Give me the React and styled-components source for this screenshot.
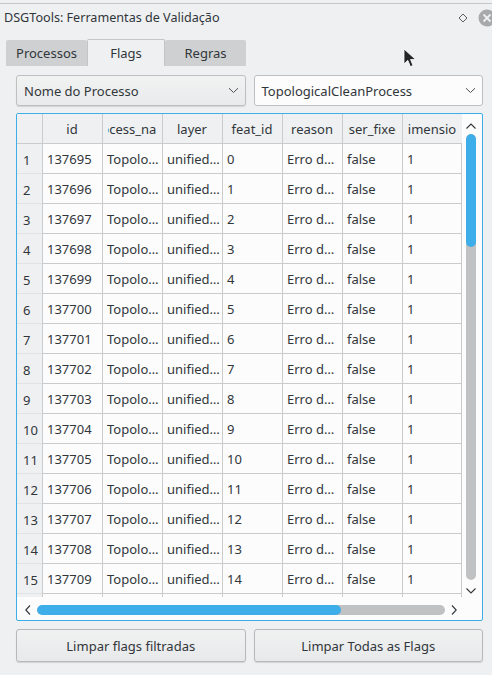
import styled, { createGlobalStyle } from "styled-components";

const GlobalStyle = createGlobalStyle`
  body {
    margin: 0;
    background: #eff0f1;
    font-family: "Noto Sans", "DejaVu Sans", sans-serif;
    font-size: 13px;
    color: #31363b;
  }
`;

const columns = ["id", "process_name", "layer", "feat_id", "reason", "user_fixed", "dimension"];

// rows shown in the flags table
const rows = Array.from({ length: 16 }, (_, i) => [
  String(137695 + i),
  "Topolo…",
  "unified…",
  String(i),
  "Erro d…",
  "false",
  "1",
]);

const App = () => {
  return (
    <Dock>
      <GlobalStyle />
      <TitleBar>
        <Title>DSGTools: Ferramentas de Validação</Title>
        <TitleIcons>
          <svg width="10" height="10" viewBox="0 0 10 10">
            <path d="M5 1 L9 5 L5 9 L1 5 Z" fill="none" stroke="#5c6063" strokeWidth="1" />
          </svg>
          <CloseBtn>
            <svg width="18" height="18" viewBox="0 0 18 18">
              <circle cx="9" cy="9" r="8.5" fill="#a7a9ab" />
              <path d="M5.5 5.5 L12.5 12.5 M12.5 5.5 L5.5 12.5" stroke="#eff0f1" strokeWidth="1.8" />
            </svg>
          </CloseBtn>
        </TitleIcons>
      </TitleBar>

      <Tabs>
        <Tab>Processos</Tab>
        <Tab $active>Flags</Tab>
        <Tab>Regras</Tab>
      </Tabs>

      <Panel>
        <ComboRow>
          <Combo>
            Nome do Processo
            <Chevron />
          </Combo>
          <Combo $editable>
            TopologicalCleanProcess
            <Chevron />
          </Combo>
        </ComboRow>

        <TableFrame>
          <TableArea>
            <Grid>
              <Corner />
              {columns.map((c) => (
                <HeadCell key={c}>
                  <HeadClip>
                    <span>{c}</span>
                  </HeadClip>
                </HeadCell>
              ))}
              {rows.map((r, i) => (
                <Row key={i}>
                  <RowNum>{i + 1}</RowNum>
                  {r.map((v, j) => (
                    <Cell key={j}>{v}</Cell>
                  ))}
                </Row>
              ))}
            </Grid>
            <VScroll>
              <Arrow>
                <svg width="12" height="8" viewBox="0 0 12 8">
                  <path d="M1.5 6.5 L6 2 L10.5 6.5" fill="none" stroke="#31363b" strokeWidth="1.1" />
                </svg>
              </Arrow>
              <VTrack>
                <VThumb />
              </VTrack>
              <Arrow>
                <svg width="12" height="8" viewBox="0 0 12 8">
                  <path d="M1.5 1.5 L6 6 L10.5 1.5" fill="none" stroke="#31363b" strokeWidth="1.1" />
                </svg>
              </Arrow>
            </VScroll>
          </TableArea>
          <HScroll>
            <HArrow>
              <svg width="8" height="12" viewBox="0 0 8 12">
                <path d="M6 1.5 L1.8 6 L6 10.5" fill="none" stroke="#31363b" strokeWidth="1.1" />
              </svg>
            </HArrow>
            <HTrack>
              <HThumb />
            </HTrack>
            <HArrow>
              <svg width="8" height="12" viewBox="0 0 8 12">
                <path d="M2 1.5 L6.2 6 L2 10.5" fill="none" stroke="#31363b" strokeWidth="1.1" />
              </svg>
            </HArrow>
          </HScroll>
        </TableFrame>

        <ButtonRow>
          <Button>Limpar flags filtradas</Button>
          <Button>Limpar Todas as Flags</Button>
        </ButtonRow>
      </Panel>

      <Cursor>
        <svg width="14" height="21" viewBox="0 0 14 21">
          <path d="M1 1 L1 16 L4.8 12.3 L7.4 18.6 L10 17.5 L7.5 11.5 L12.6 11.5 Z" fill="#232627" stroke="#ffffff" strokeWidth="0.8" />
        </svg>
      </Cursor>
    </Dock>
  );
};

const Chevron = () => (
  <ChevronWrap>
    <svg width="11" height="7" viewBox="0 0 11 7">
      <path d="M1 1.2 L5.5 5.5 L10 1.2" fill="none" stroke="#4d4f51" strokeWidth="1" />
    </svg>
  </ChevronWrap>
);

export default App;

const Dock = styled.div`
  position: relative;
  width: 492px;
  height: 675px;
  overflow: hidden;
  border-top: 1px solid #c4c6c8;
  margin-top: 3px;
  box-sizing: border-box;
`;

const TitleBar = styled.div`
  height: 33px;
  display: flex;
  align-items: center;
  justify-content: space-between;
  padding-left: 4px;
  margin-top: -3px;
  margin-bottom: 5px;
`;

const Title = styled.div`
  font-size: 12.6px;
  color: #31363b;
`;

const TitleIcons = styled.div`
  display: flex;
  align-items: center;
  gap: 10px;
  margin-right: -4px;
`;

const CloseBtn = styled.div`
  display: flex;
`;

const Tabs = styled.div`
  display: flex;
  padding-left: 6px;
  height: 27px;
  align-items: flex-end;
`;

const Tab = styled.div`
  width: ${(p) => (p.$active ? "78px" : "81px")};
  height: ${(p) => (p.$active ? "27px" : "26px")};
  display: flex;
  align-items: center;
  justify-content: center;
  box-sizing: border-box;
  background: ${(p) => (p.$active ? "#eff0f1" : "#cfd0d1")};
  border: ${(p) => (p.$active ? "1px solid #c3c5c7" : "none")};
  border-bottom: none;
  border-radius: 2px 2px 0 0;
  color: #31363b;
`;

const Panel = styled.div`
  padding: 9px 9px 0 16px;
`;

const ComboRow = styled.div`
  display: flex;
  gap: 8px;
`;

const Combo = styled.div`
  flex: 1;
  height: 31px;
  box-sizing: border-box;
  display: flex;
  align-items: center;
  justify-content: space-between;
  padding: 0 4px 0 7px;
  border: 1px solid #bdbfc1;
  border-radius: 3px;
  background: ${(p) => (p.$editable ? "#fcfcfc" : "linear-gradient(#f1f2f2, #e9eaeb)")};
  box-shadow: ${(p) => (p.$editable ? "none" : "0 1px 1px rgba(0,0,0,0.12)")};
  color: #31363b;
`;

const ChevronWrap = styled.span`
  display: flex;
  padding-right: 2px;
`;

const TableFrame = styled.div`
  margin-top: 7px;
  height: 508px;
  box-sizing: border-box;
  border: 1px solid #3daee9;
  border-radius: 2px;
  background: #fcfcfc;
  display: flex;
  flex-direction: column;
  overflow: hidden;
`;

const TableArea = styled.div`
  display: flex;
  height: 483px;
  flex: none;
  overflow: hidden;
`;

const Grid = styled.div`
  display: grid;
  grid-template-columns: 25px repeat(7, 60px);
  grid-auto-rows: 30px;
  align-content: start;
  width: 445px;
  flex: none;
`;

const Row = styled.div`
  display: contents;
`;

const Corner = styled.div`
  background: #eff0f1;
  border-bottom: 1px solid #cacbcc;
`;

const HeadCell = styled.div`
  background: #eff0f1;
  border-left: 1px solid #cacbcc;
  border-bottom: 1px solid #cacbcc;
  display: flex;
  align-items: center;
  padding: 0 6px 0 5px;
  min-width: 0;
`;

const HeadClip = styled.div`
  flex: 1;
  display: flex;
  justify-content: center;
  overflow: hidden;
  white-space: nowrap;
  span {
    flex: none;
  }
`;

const RowNum = styled.div`
  background: #eff0f1;
  border-bottom: 1px solid #e1e2e3;
  display: flex;
  align-items: center;
  padding-left: 6px;
  padding-top: 2px;
  box-sizing: border-box;
`;

const Cell = styled.div`
  border-left: 1px solid #cacbcc;
  border-bottom: 1px solid #cacbcc;
  display: flex;
  align-items: center;
  padding-left: 4px;
  white-space: nowrap;
  overflow: hidden;
  box-sizing: border-box;
  background: #fcfcfc;
  &:last-child {
    border-right: 1px solid #cacbcc;
  }
`;

const VScroll = styled.div`
  flex: 1;
  display: flex;
  flex-direction: column;
  align-items: center;
  padding: 6px 2px 0 0;
`;

const Arrow = styled.div`
  height: 12px;
  display: flex;
  align-items: center;
  justify-content: center;
`;

const VTrack = styled.div`
  width: 10px;
  height: 446px;
  margin: 2px 0 5px;
  border-radius: 5px;
  background: #c0c1c2;
  overflow: hidden;
`;

const VThumb = styled.div`
  height: 113px;
  border-radius: 5px;
  background: #3daee9;
`;

const HScroll = styled.div`
  flex: 1;
  display: flex;
  align-items: center;
  padding: 3px 22px 0 5px;
  gap: 3px;
`;

const HArrow = styled.div`
  width: 12px;
  display: flex;
  justify-content: center;
`;

const HTrack = styled.div`
  flex: 1;
  height: 10px;
  border-radius: 5px;
  background: #c0c1c2;
  overflow: hidden;
`;

const HThumb = styled.div`
  width: 74.5%;
  height: 100%;
  border-radius: 5px;
  background: #3daee9;
`;

const ButtonRow = styled.div`
  display: flex;
  gap: 8px;
  margin-top: 8px;
`;

const Button = styled.button`
  flex: 1;
  height: 33px;
  font-family: inherit;
  font-size: 13px;
  color: #31363b;
  border: 1px solid #b6b8ba;
  border-radius: 3px;
  background: linear-gradient(#f0f1f1, #e8e9ea);
  box-shadow: 0 1px 1px rgba(0, 0, 0, 0.12);
`;

const Cursor = styled.div`
  position: absolute;
  left: 403px;
  top: 44px;
`;
